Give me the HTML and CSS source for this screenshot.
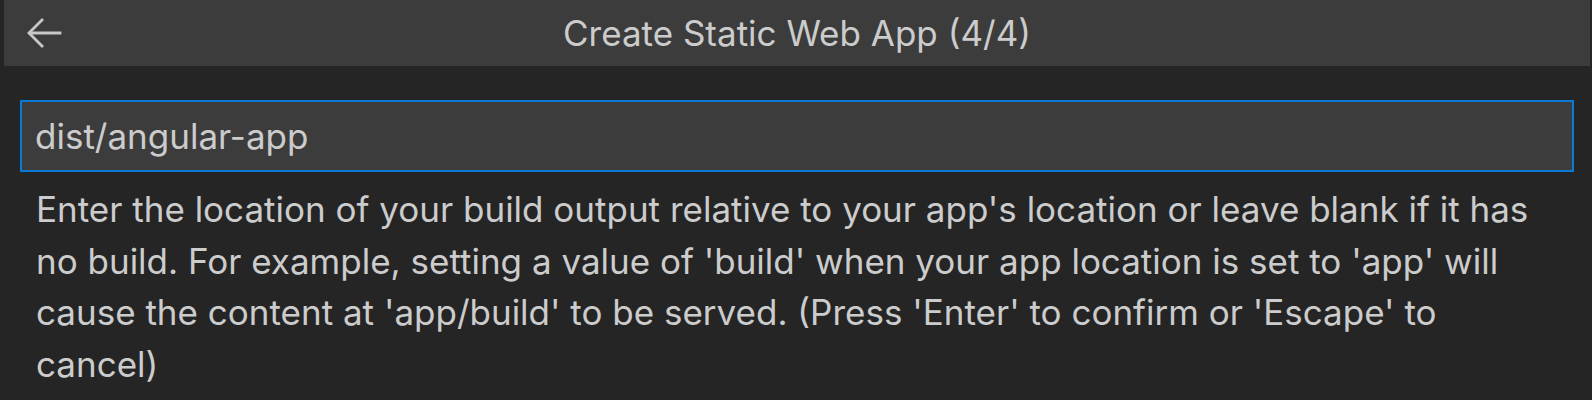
FILE: index.html
```html
<!DOCTYPE html>
<html>
<head>
<meta charset="utf-8">
<link rel="stylesheet" href="styles.css">
</head>
<body>
<div class="quick-input">
  <div class="title-bar">
    <button class="back" aria-label="Back">
      <svg width="36" height="32" viewBox="0 0 36 32" fill="none" stroke="#c8c8c8" stroke-width="2.8" stroke-linecap="square">
        <path d="M34 15H4"/>
        <path d="M16 2L3 15L16 28"/>
      </svg>
    </button>
    <div class="title">Create Static Web App (4/4)</div>
  </div>
  <div class="body">
    <div class="input-box">dist/angular-app</div>
    <div class="message">Enter the location of your build output relative to your app's location or leave blank if it has no build. For example, setting a value of 'build' when your app location is set to 'app' will cause the content at 'app/build' to be served. (Press 'Enter' to confirm or 'Escape' to cancel)</div>
  </div>
</div>
</body>
</html>
```
FILE: styles.css
```css
html, body {
  margin: 0;
  padding: 0;
  background: #252526;
  height: 100%;
}
body {
  font-family: Inter, "Noto Sans", sans-serif;
  color: #cccccc;
  overflow: hidden;
}
.quick-input {
  padding: 0 2px 0 4px;
}
.title-bar {
  position: relative;
  height: 66px;
  background: #3c3c3c;
  display: flex;
  align-items: center;
  justify-content: center;
}
.back {
  position: absolute;
  left: 22px;
  top: 18px;
  padding: 0;
  margin: 0;
  border: 0;
  background: none;
  display: flex;
}
.title {
  font-size: 35px;
  color: #cccccc;
  padding-left: 0;
}
.body {
  padding: 34px 16px 0 16px;
}
.input-box {
  box-sizing: border-box;
  height: 72px;
  border: 2px solid #0a7ad4;
  background: #3c3c3c;
  font-size: 35px;
  display: flex;
  align-items: center;
  padding-left: 13px;
  color: #cccccc;
}
.message {
  font-size: 35px;
  line-height: 51.6px;
  padding: 12px 16px 0 16px;
  color: #cccccc;
}
```
